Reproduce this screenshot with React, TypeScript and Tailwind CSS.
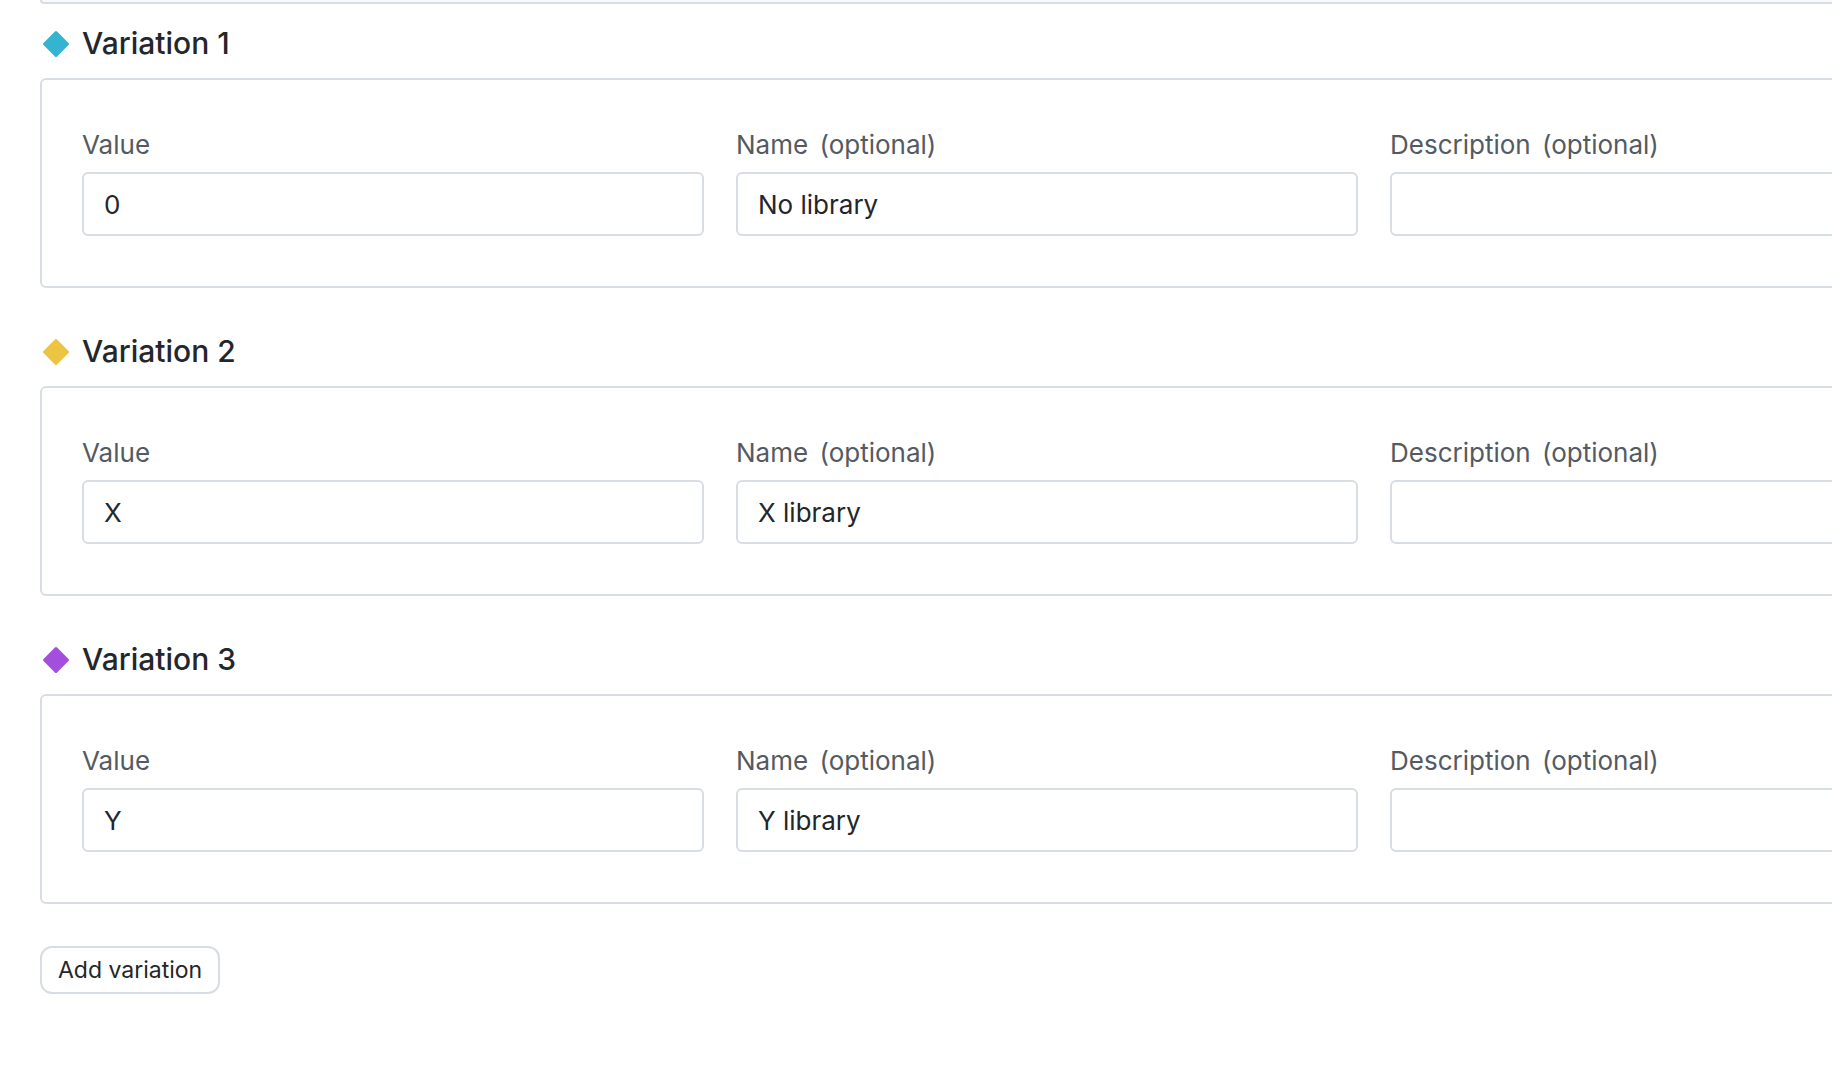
import { useId } from "react";

const variations = [
  { title: "Variation 1", color: "#34b4d0", value: "0", name: "No library" },
  { title: "Variation 2", color: "#edc342", value: "X", name: "X library" },
  { title: "Variation 3", color: "#a34fde", value: "Y", name: "Y library" },
];

function Diamond({ color }: { color: string }) {
  return (
    <svg viewBox="0 0 32 32" className="size-8 shrink-0 self-center" aria-hidden="true">
      <path
        d="M14.9 3.5a1.5 1.5 0 0 1 2.2 0l11.4 11.4a1.5 1.5 0 0 1 0 2.2L17.1 28.5a1.5 1.5 0 0 1-2.2 0L3.5 17.1a1.5 1.5 0 0 1 0-2.2Z"
        fill={color}
      />
    </svg>
  );
}

type FieldProps = { label: string; optional?: boolean; value?: string };

function Field({ label, optional, value = "" }: FieldProps) {
  const id = useId();
  return (
    <div className="flex flex-col gap-[7px]">
      <label htmlFor={id} className="text-[26px] leading-10 text-[#545a62]">
        {label}
        {optional && <span className="ml-1"> (optional)</span>}
      </label>
      <input
        id={id}
        type="text"
        defaultValue={value}
        className="h-16 w-full rounded-md border-2 border-[#d8dde3] bg-white px-5 text-[26px] text-[#23262b] outline-none"
      />
    </div>
  );
}

export default function App() {
  return (
    <main className="overflow-hidden bg-white pb-16 pl-10 font-['Inter',sans-serif] text-[#23262b]">
      <div className="w-[calc(100vw+182px)]">
        <div className="h-1 rounded-b-md border-x-2 border-b-2 border-[#d8dde3] bg-[#f7f9fc]" />
        <div className="flex flex-col gap-[46px] pt-[22px]">
          {variations.map((v) => (
            <section key={v.title}>
              <div className="mb-4 flex h-9 items-start gap-[10px]">
                <Diamond color={v.color} />
                <h2 className="text-[30px] leading-[34px] font-medium">{v.title}</h2>
              </div>
              <div className="grid grid-cols-3 gap-8 rounded-md border-2 border-[#d8dde3] px-10 pt-[45px] pb-[50px]">
                <Field label="Value" value={v.value} />
                <Field label="Name" optional value={v.name} />
                <Field label="Description" optional />
              </div>
            </section>
          ))}
        </div>
        <button
          type="button"
          className="mt-[42px] h-12 rounded-xl border-2 border-[#d8dde3] bg-white px-4 text-[23px]"
        >
          Add variation
        </button>
      </div>
    </main>
  );
}
